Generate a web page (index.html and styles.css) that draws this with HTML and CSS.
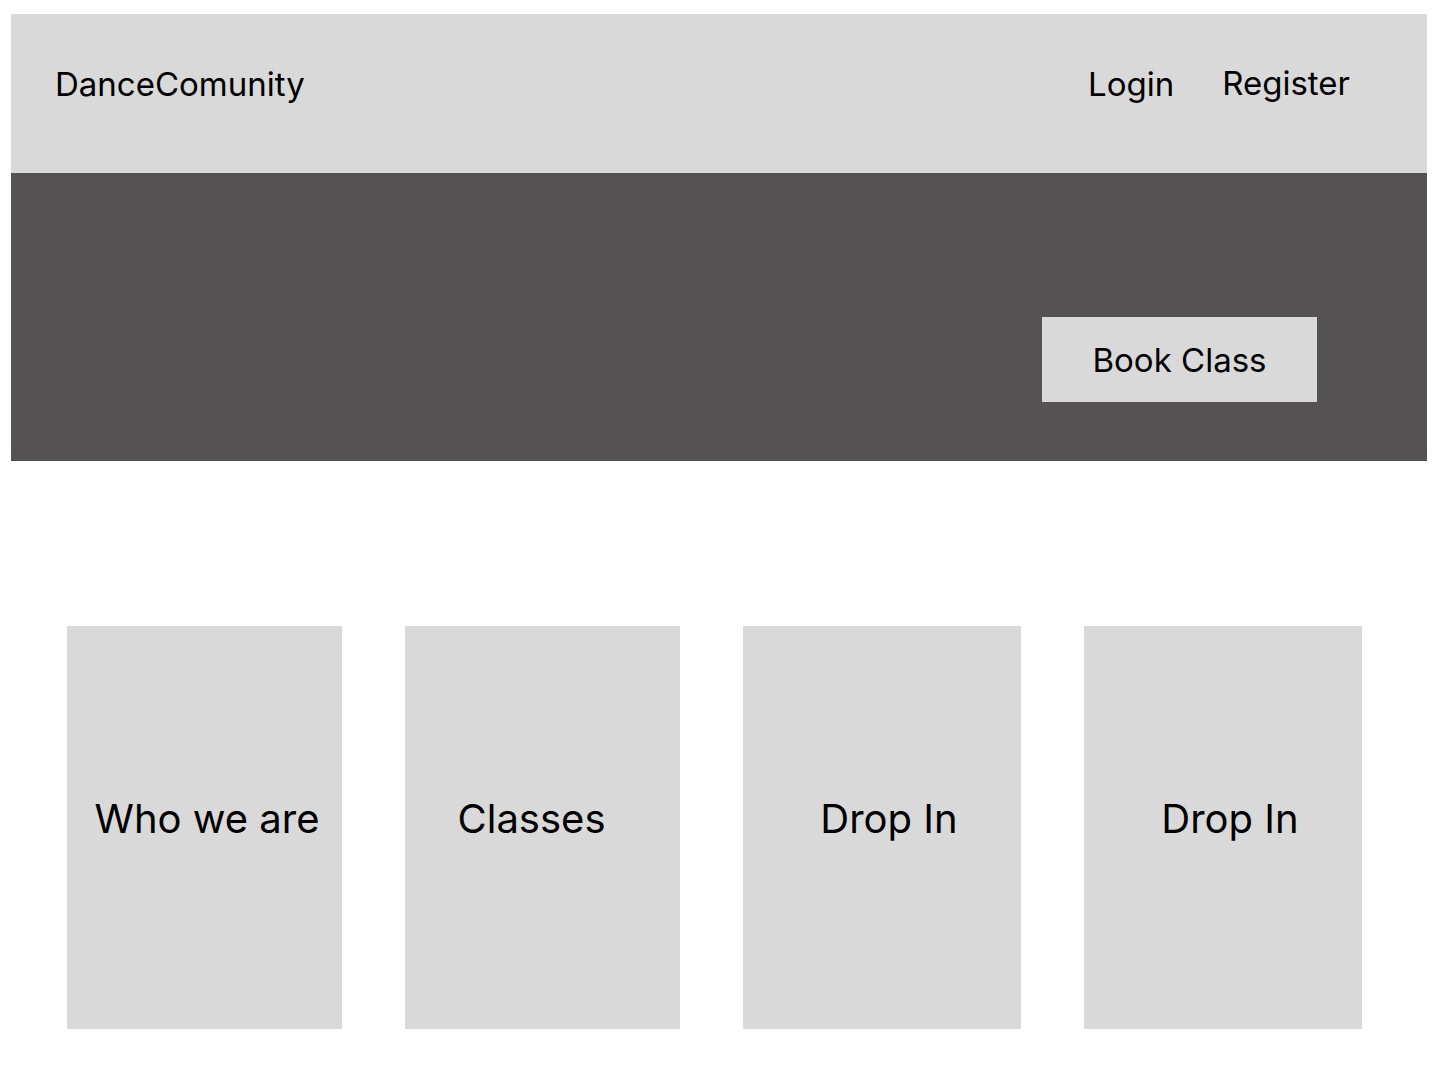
FILE: index.html
```html
<!DOCTYPE html>
<html lang="en">
<head>
<meta charset="utf-8">
<title>DanceComunity</title>
<link rel="stylesheet" href="styles.css">
</head>
<body>
<div class="frame">
  <header class="topbar">
    <div class="logo">DanceComunity</div>
    <nav class="nav">
      <a class="nav-link" href="#">Login</a>
      <a class="nav-link nav-link--reg" href="#">Register</a>
    </nav>
  </header>
  <section class="hero">
    <button class="book-btn">Book Class</button>
  </section>
  <section class="cards">
    <div class="card card--1">Who we are</div>
    <div class="card card--2">Classes</div>
    <div class="card card--3">Drop In</div>
    <div class="card card--4">Drop In</div>
  </section>
</div>
</body>
</html>
```

FILE: styles.css
```css
* { box-sizing: border-box; }
html, body { margin: 0; padding: 0; background: #ffffff; }
body {
  font-family: Inter, "Noto Sans", sans-serif;
  color: #000000;
}
.frame {
  width: 1416px;
  margin: 14px 0 0 11px;
}
.topbar {
  height: 159px;
  background: #d9d9d9;
  display: flex;
  justify-content: space-between;
  align-items: flex-start;
  padding: 50px 77px 0 44px;
}
.logo {
  font-size: 33px;
  line-height: 40px;
}
.nav {
  display: flex;
  gap: 48px;
}
.nav-link {
  font-size: 33px;
  line-height: 40px;
  color: #000000;
  text-decoration: none;
}
.nav-link--reg { position: relative; top: -1px; }
.hero {
  height: 288px;
  background: #545253;
  display: flex;
  justify-content: flex-end;
  align-items: flex-start;
  padding: 144px 110px 0 0;
}
.book-btn {
  width: 275px;
  height: 85px;
  background: #d9d9d9;
  border: 0;
  border-radius: 0;
  font-family: Inter, "Noto Sans", sans-serif;
  font-size: 33px;
  color: #000000;
  padding: 0;
  cursor: pointer;
}
.cards {
  display: grid;
  grid-template-columns: 275px 275px 278px 278px;
  column-gap: 63px;
  padding: 165px 0 0 56px;
}
.card {
  height: 403px;
  background: #d9d9d9;
  display: flex;
  align-items: center;
  justify-content: center;
  font-size: 40px;
  padding-bottom: 19px;
}
.card--1 { padding-left: 5px; }
.card--2 { padding-right: 22px; }
.card--3 { padding-left: 14px; }
.card--4 { padding-left: 14px; }
```
